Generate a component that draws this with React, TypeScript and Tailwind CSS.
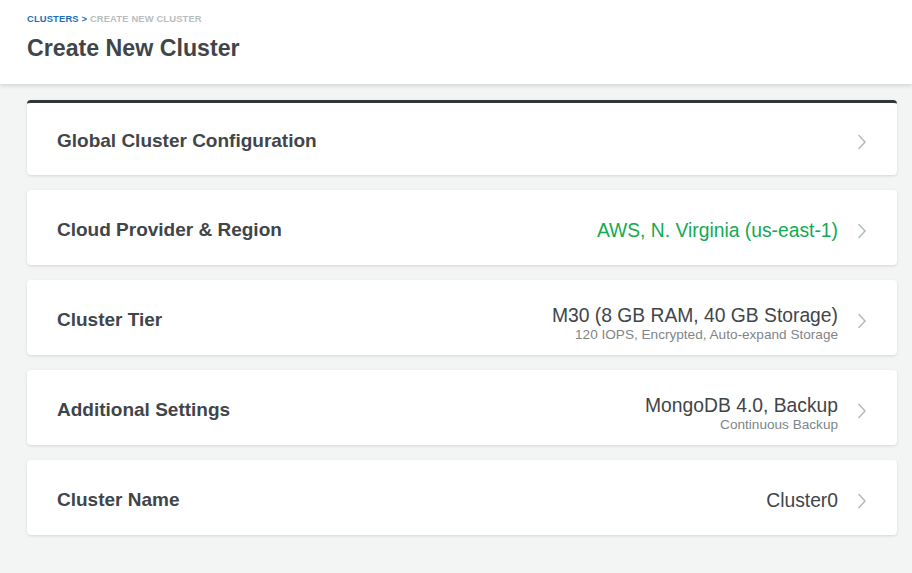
import React from 'react';

type Row = {
  title: string;
  value?: string;
  sub?: string;
  green?: boolean;
  active?: boolean;
};

const rows: Row[] = [
  { title: 'Global Cluster Configuration', active: true },
  { title: 'Cloud Provider & Region', value: 'AWS, N. Virginia (us-east-1)', green: true },
  { title: 'Cluster Tier', value: 'M30 (8 GB RAM, 40 GB Storage)', sub: '120 IOPS, Encrypted, Auto-expand Storage' },
  { title: 'Additional Settings', value: 'MongoDB 4.0, Backup', sub: 'Continuous Backup' },
  { title: 'Cluster Name', value: 'Cluster0' },
];

function Chevron() {
  return (
    <svg width="10" height="16" viewBox="0 0 10 16" fill="none" className="shrink-0">
      <path d="M2 1.5 L8 8 L2 14.5" stroke="#b4bcbf" strokeWidth="1.6" strokeLinecap="round" strokeLinejoin="round" />
    </svg>
  );
}

export default function App() {
  return (
    <div className="min-h-[573px] bg-[#f3f4f4] font-['Liberation_Sans',Arial,sans-serif]">
      <header className="bg-white h-[84px] px-[27px] pt-[13px] shadow-[0_2px_4px_rgba(0,0,0,0.12)] relative">
        <div className="text-[9.4px] font-bold uppercase tracking-[0.15px] leading-[12px]">
          <span className="text-[#1a6fb8]">Clusters</span>
          <span className="text-[#1a6fb8]"> &gt; </span>
          <span className="text-[#b9bdbf]">Create New Cluster</span>
        </div>
        <h1 className="mt-[8px] text-[23.2px] font-bold text-[#3f4549] leading-[30px]">Create New Cluster</h1>
      </header>

      <main className="pl-[27px] pr-[15px] pt-[16px] pb-[30px] flex flex-col gap-[15px]">
        {rows.map((r) => (
          <div
            key={r.title}
            className={
              'bg-white rounded-[4px] h-[75px] pl-[30px] pr-[30px] flex items-center justify-between shadow-[0_1px_3px_rgba(0,0,0,0.12)] ' +
              (r.active ? 'pt-[5px] border-t-[3px] border-[#313638]' : 'pt-[6px]')
            }
          >
            <span className="text-[19px] font-bold text-[#3f4549]">{r.title}</span>
            <div className="flex items-center gap-[19px]">
              {r.value && (
                <div className={'flex flex-col items-end ' + (r.sub ? 'pt-[6px]' : '')}>
                  <span className={'text-[19.3px] leading-[22px] ' + (r.green ? 'text-[#13aa52]' : 'text-[#3f4549]')}>
                    {r.value}
                  </span>
                  {r.sub && <span className="text-[13.6px] leading-[16px] text-[#7f8589]">{r.sub}</span>}
                </div>
              )}
              <Chevron />
            </div>
          </div>
        ))}
      </main>
    </div>
  );
}
